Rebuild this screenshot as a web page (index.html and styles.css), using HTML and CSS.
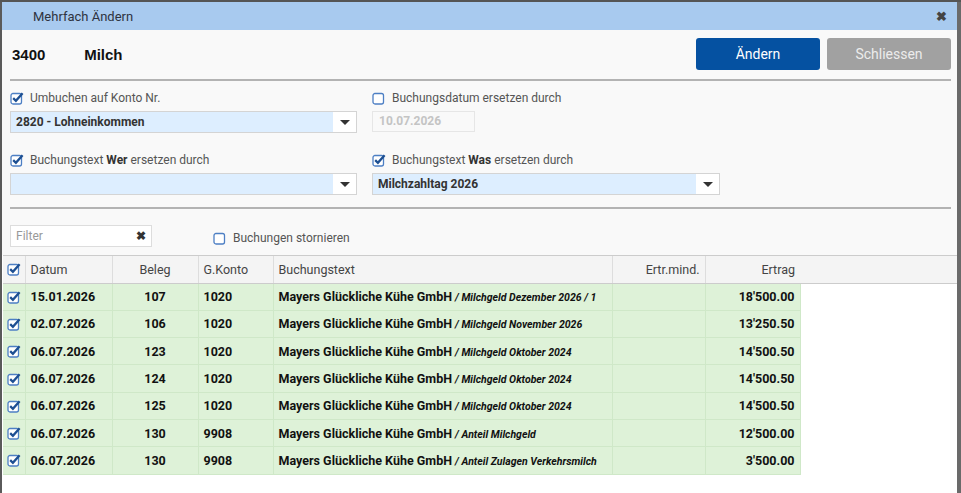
FILE: index.html
```html
<!DOCTYPE html>
<html lang="de">
<head>
    <meta charset="UTF-8">
    <title>Mehrfach Ändern</title>
    <link rel="stylesheet" href="styles.css">
</head>
<body>
    <div class="dialog">
        <div class="titlebar">
            <span class="title">Mehrfach Ändern</span>
            <span class="close">&#10006;</span>
        </div>

        <div class="content">
            <div class="head-row">
                <div class="account">
                    <span class="acc-nr">3400</span>
                    <span class="acc-name">Milch</span>
                </div>
                <div class="buttons">
                    <button class="btn btn-primary">Ändern</button>
                    <button class="btn btn-grey">Schliessen</button>
                </div>
            </div>

            <div class="form">
                <div class="field">
                    <label class="check"><svg class="cb" viewBox="0 0 14 14"><rect x="1" y="2.5" width="10.5" height="10.5" rx="2" fill="#fff" stroke="#4d7fc4" stroke-width="1.3"/><path d="M3.2 7.2 L5.9 9.8 L12.6 2.2" fill="none" stroke="#1d4f92" stroke-width="2.3"/></svg><span>Umbuchen auf Konto Nr.</span></label>
                    <div class="select"><span class="select-val">2820 - Lohneinkommen</span><span class="arrow"></span></div>
                </div>
                <div class="field">
                    <label class="check"><svg class="cb" viewBox="0 0 14 14"><rect x="1" y="2.5" width="10.5" height="10.5" rx="2" fill="#fff" stroke="#4d7fc4" stroke-width="1.3"/></svg><span>Buchungsdatum ersetzen durch</span></label>
                    <div class="date-input">10.07.2026</div>
                </div>
                <div class="field">
                    <label class="check"><svg class="cb" viewBox="0 0 14 14"><rect x="1" y="2.5" width="10.5" height="10.5" rx="2" fill="#fff" stroke="#4d7fc4" stroke-width="1.3"/><path d="M3.2 7.2 L5.9 9.8 L12.6 2.2" fill="none" stroke="#1d4f92" stroke-width="2.3"/></svg><span>Buchungstext <b>Wer</b> ersetzen durch</span></label>
                    <div class="select"><span class="select-val"></span><span class="arrow"></span></div>
                </div>
                <div class="field">
                    <label class="check"><svg class="cb" viewBox="0 0 14 14"><rect x="1" y="2.5" width="10.5" height="10.5" rx="2" fill="#fff" stroke="#4d7fc4" stroke-width="1.3"/><path d="M3.2 7.2 L5.9 9.8 L12.6 2.2" fill="none" stroke="#1d4f92" stroke-width="2.3"/></svg><span>Buchungstext <b>Was</b> ersetzen durch</span></label>
                    <div class="select"><span class="select-val">Milchzahltag 2026</span><span class="arrow"></span></div>
                </div>
            </div>

            <div class="filter-row">
                <div class="filter"><span class="filter-ph">Filter</span><span class="filter-x">&#10006;</span></div>
                <label class="check storno"><svg class="cb" viewBox="0 0 14 14"><rect x="1" y="2.5" width="10.5" height="10.5" rx="2" fill="#fff" stroke="#4d7fc4" stroke-width="1.3"/></svg><span>Buchungen stornieren</span></label>
            </div>
        </div>

        <table class="grid">
            <thead>
                <tr>
                    <th class="c-check"><svg class="cb" viewBox="0 0 14 14"><rect x="1" y="2.5" width="10.5" height="10.5" rx="2" fill="#fff" stroke="#4d7fc4" stroke-width="1.3"/><path d="M3.2 7.2 L5.9 9.8 L12.6 2.2" fill="none" stroke="#1d4f92" stroke-width="2.3"/></svg></th>
                    <th class="c-date">Datum</th>
                    <th class="c-beleg">Beleg</th>
                    <th class="c-konto">G.Konto</th>
                    <th class="c-text">Buchungstext</th>
                    <th class="c-num c-mind">Ertr.mind.</th>
                    <th class="c-num c-ertrag">Ertrag</th>
                    <th class="c-fill"></th>
                </tr>
            </thead>
            <tbody id="rows"></tbody>
        </table>
    </div>

    <script>
        const rows = [
            ["15.01.2026", "107", "1020", "Milchgeld Dezember 2026 / 1", "18'500.00"],
            ["02.07.2026", "106", "1020", "Milchgeld November 2026", "13'250.50"],
            ["06.07.2026", "123", "1020", "Milchgeld Oktober 2024", "14'500.50"],
            ["06.07.2026", "124", "1020", "Milchgeld Oktober 2024", "14'500.50"],
            ["06.07.2026", "125", "1020", "Milchgeld Oktober 2024", "14'500.50"],
            ["06.07.2026", "130", "9908", "Anteil Milchgeld", "12'500.00"],
            ["06.07.2026", "130", "9908", "Anteil Zulagen Verkehrsmilch", "3'500.00"]
        ];

        const checkSvg = '<svg class="cb" viewBox="0 0 14 14"><rect x="1" y="2.5" width="10.5" height="10.5" rx="2" fill="#fff" stroke="#4d7fc4" stroke-width="1.3"/><path d="M3.2 7.2 L5.9 9.8 L12.6 2.2" fill="none" stroke="#1d4f92" stroke-width="2.3"/></svg>';

        const tbody = document.getElementById("rows");
        rows.forEach(r => {
            const tr = document.createElement("tr");
            tr.innerHTML =
                '<td class="c-check">' + checkSvg + '</td>' +
                '<td class="c-date">' + r[0] + '</td>' +
                '<td class="c-beleg">' + r[1] + '</td>' +
                '<td class="c-konto">' + r[2] + '</td>' +
                '<td class="c-text">Mayers Glückliche Kühe GmbH <i>/ ' + r[3] + '</i></td>' +
                '<td class="c-num c-mind"></td>' +
                '<td class="c-num c-ertrag">' + r[4] + '</td>' +
                '<td class="c-fill"></td>';
            tbody.appendChild(tr);
        });
    </script>
</body>
</html>
```

FILE: styles.css
```css
body {
    margin: 0;
    background: #555;
    font-family: Roboto, "Liberation Sans", Arial, sans-serif;
    color: #222;
}

.dialog {
    width: 955px;
    height: 491px;
    margin-top: 2px;
    border-left: 2px solid #5a5a5a;
    border-right: 4px solid #6a6a6a;
    background: #fff;
    overflow: hidden;
}

.titlebar {
    height: 28px;
    background: #a8caef;
    display: flex;
    align-items: center;
    justify-content: space-between;
    padding: 0 10px 0 31px;
}

.title {
    font-size: 13px;
    color: #2e3340;
}

.close {
    font-size: 13px;
    font-weight: bold;
    color: #444;
}

.content {
    background: #f9f9f9;
    padding: 0 6px 8px 8px;
}

.head-row {
    display: flex;
    justify-content: space-between;
    align-items: center;
    padding: 8px 0 9px 2px;
    border-bottom: 2px solid #b3b3b3;
}

.account {
    font-family: "Liberation Sans", Arial, sans-serif;
    font-weight: bold;
    font-size: 15px;
    color: #111;
}

.acc-nr {
    display: inline-block;
    width: 68px;
}

.buttons {
    display: flex;
    gap: 7px;
}

.btn {
    width: 124px;
    height: 32px;
    border: none;
    border-radius: 3px;
    font-family: Roboto, sans-serif;
    font-size: 14px;
}

.btn-primary {
    background: #0551a1;
    color: #fff;
}

.btn-grey {
    background: #a1a1a1;
    color: #ececec;
}

.form {
    display: grid;
    grid-template-columns: 347px 348px;
    column-gap: 15px;
    row-gap: 19px;
    padding: 9px 0 12px 0;
    border-bottom: 2px solid #b3b3b3;
}

.field {
    display: flex;
    flex-direction: column;
    gap: 5px;
}

.check {
    display: flex;
    align-items: center;
    height: 16px;
    font-size: 12px;
    color: #555;
    white-space: pre;
}

.check b {
    color: #333;
}

.cb {
    width: 14px;
    height: 14px;
    margin-right: 6px;
    flex-shrink: 0;
}

.select {
    display: flex;
    height: 22px;
    border: 1px solid #d4d4d4;
    box-sizing: border-box;
    background: #ddeeff;
}

.select-val {
    flex: 1;
    padding-left: 5px;
    font-size: 12px;
    font-weight: bold;
    line-height: 20px;
    color: #333;
}

.arrow {
    width: 23px;
    background: #fff;
    position: relative;
}

.arrow::after {
    content: "";
    position: absolute;
    left: 7px;
    top: 8px;
    border-left: 5px solid transparent;
    border-right: 5px solid transparent;
    border-top: 5px solid #333;
}

.date-input {
    width: 103px;
    height: 21px;
    box-sizing: border-box;
    border: 1px solid #e6e6e6;
    font-size: 12px;
    font-weight: bold;
    color: #c4c4c4;
    line-height: 19px;
    padding-left: 6px;
}

.filter-row {
    display: flex;
    align-items: center;
    padding: 16px 0 0 0;
}

.filter {
    width: 142px;
    height: 22px;
    box-sizing: border-box;
    border: 1px solid #ddd;
    background: #fff;
    display: flex;
    justify-content: space-between;
    align-items: center;
    padding: 0 5px;
    font-size: 12px;
}

.filter-ph {
    color: #999;
}

.filter-x {
    font-size: 12px;
    font-weight: bold;
    color: #333;
}

.storno {
    margin-left: 61px;
    margin-top: 3px;
}

.grid {
    border-collapse: collapse;
    margin-left: 1px;
    width: 955px;
    font-size: 12.5px;
    table-layout: fixed;
}

.grid th {
    height: 27.5px;
    box-sizing: border-box;
    background: #f4f4f4;
    font-weight: normal;
    color: #444;
    font-size: 12.5px;
    border-top: 1px solid #ccc;
    border-bottom: 1px solid #ccc;
    border-left: 1px solid #ddd;
    text-align: left;
    padding: 0 5px;
}

.grid td {
    height: 27.3px;
    box-sizing: border-box;
    background: #def2d8;
    border: 1px solid #cfe8c8;
    font-weight: bold;
    color: #111;
    padding: 0 5px;
    white-space: nowrap;
}

.grid th.c-check,
.grid td.c-check {
    width: 22px;
    padding: 0 0 0 4px;
    border-left: none;
}

.grid .cb {
    display: block;
    margin: 0;
}

.c-date { width: 87px; }
.c-beleg { width: 86px; text-align: center !important; }
.c-konto { width: 75px; }
.c-text { width: 339px; }
.c-mind { width: 93px; }
.c-ertrag { width: 95px; }
.c-num { text-align: right !important; }

.grid td i {
    font-size: 10.5px;
}

.grid th.c-fill {
    border-left: none;
}

.grid td.c-fill {
    background: #fff;
    border: none;
}
```
